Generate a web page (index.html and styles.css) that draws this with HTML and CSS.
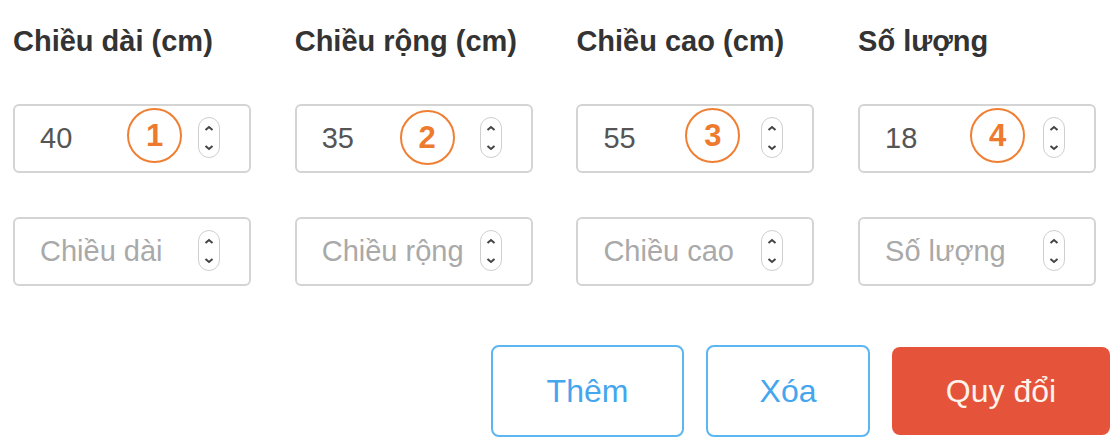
FILE: index.html
```html
<!DOCTYPE html>
<html lang="vi">
<head>
    <meta charset="UTF-8">
    <meta name="viewport" content="width=device-width, initial-scale=1.0">
    <title>Quy đổi kích thước</title>
    <link rel="stylesheet" href="styles.css">
</head>
<body>

    <div class="converter">
        <div class="grid">
            <div class="col-label">Chiều dài (cm)</div>
            <div class="col-label">Chiều rộng (cm)</div>
            <div class="col-label">Chiều cao (cm)</div>
            <div class="col-label">Số lượng</div>

            <!-- Hàng đầu tiên: giá trị đã nhập -->
            <div class="num-box">
                <span class="value">40</span>
                <span class="mark mark-1">1</span>
                <span class="spinner"><svg viewBox="0 0 22 40" width="22" height="40"><path d="M7.5 12 L11 9 L14.5 12 M7.5 28 L11 31 L14.5 28"/></svg></span>
            </div>
            <div class="num-box">
                <span class="value">35</span>
                <span class="mark mark-2">2</span>
                <span class="spinner"><svg viewBox="0 0 22 40" width="22" height="40"><path d="M7.5 12 L11 9 L14.5 12 M7.5 28 L11 31 L14.5 28"/></svg></span>
            </div>
            <div class="num-box">
                <span class="value">55</span>
                <span class="mark mark-3">3</span>
                <span class="spinner"><svg viewBox="0 0 22 40" width="22" height="40"><path d="M7.5 12 L11 9 L14.5 12 M7.5 28 L11 31 L14.5 28"/></svg></span>
            </div>
            <div class="num-box">
                <span class="value">18</span>
                <span class="mark mark-4">4</span>
                <span class="spinner"><svg viewBox="0 0 22 40" width="22" height="40"><path d="M7.5 12 L11 9 L14.5 12 M7.5 28 L11 31 L14.5 28"/></svg></span>
            </div>

            <!-- Hàng trống -->
            <div class="num-box">
                <span class="value placeholder">Chiều dài</span>
                <span class="spinner"><svg viewBox="0 0 22 40" width="22" height="40"><path d="M7.5 12 L11 9 L14.5 12 M7.5 28 L11 31 L14.5 28"/></svg></span>
            </div>
            <div class="num-box">
                <span class="value placeholder">Chiều rộng</span>
                <span class="spinner"><svg viewBox="0 0 22 40" width="22" height="40"><path d="M7.5 12 L11 9 L14.5 12 M7.5 28 L11 31 L14.5 28"/></svg></span>
            </div>
            <div class="num-box">
                <span class="value placeholder">Chiều cao</span>
                <span class="spinner"><svg viewBox="0 0 22 40" width="22" height="40"><path d="M7.5 12 L11 9 L14.5 12 M7.5 28 L11 31 L14.5 28"/></svg></span>
            </div>
            <div class="num-box">
                <span class="value placeholder">Số lượng</span>
                <span class="spinner"><svg viewBox="0 0 22 40" width="22" height="40"><path d="M7.5 12 L11 9 L14.5 12 M7.5 28 L11 31 L14.5 28"/></svg></span>
            </div>
        </div>

        <div class="actions">
            <button type="button" class="btn btn-outline btn-add">Thêm</button>
            <button type="button" class="btn btn-outline btn-del">Xóa</button>
            <button type="button" class="btn btn-convert">Quy đổi</button>
        </div>
    </div>

</body>
</html>
```

FILE: styles.css
```css
body {
    font-family: "Liberation Sans", Arial, sans-serif;
    margin: 0;
    padding: 0;
    background: #fff;
}

.converter {
    padding: 24px 4px 0 13px;
}

.grid {
    display: grid;
    grid-template-columns: repeat(4, 238px);
    column-gap: 43.7px;
}

.col-label {
    font-size: 29px;
    line-height: 34px;
    font-weight: bold;
    color: #333;
    margin-bottom: 46px;
}

.num-box {
    position: relative;
    height: 69px;
    box-sizing: border-box;
    border: 2px solid #d4d4d4;
    border-radius: 6px;
    display: flex;
    align-items: center;
    padding: 0 29px 0 25px;
    margin-bottom: 44px;
}

.value {
    flex: 1;
    font-size: 29px;
    color: #555;
}

.value.placeholder {
    color: #a9a9a9;
}

.spinner {
    width: 22px;
    height: 41px;
    box-sizing: border-box;
    border: 1.5px solid #cfcfcf;
    border-radius: 11px;
    display: flex;
    align-items: center;
    justify-content: center;
    margin-top: -2px;
}

.spinner svg {
    display: block;
    flex: none;
}

.spinner path {
    fill: none;
    stroke: #444;
    stroke-width: 2;
}

/* Vòng tròn đánh số */
.mark {
    position: absolute;
    top: 2px;
    width: 55px;
    height: 55px;
    box-sizing: border-box;
    border: 2px solid #ef7f33;
    border-radius: 50%;
    color: #ee7a2d;
    font-size: 31px;
    font-weight: bold;
    display: flex;
    align-items: center;
    justify-content: center;
}

.mark-1 { left: 112px; }
.mark-2 { left: 103px; top: 4px; }
.mark-3 { left: 107px; }
.mark-4 { left: 110px; }

.actions {
    display: flex;
    justify-content: flex-end;
    align-items: center;
    gap: 22px;
    margin-top: 15px;
}

.btn {
    font-family: "Liberation Sans", Arial, sans-serif;
    font-size: 32px;
    border-radius: 8px;
    cursor: pointer;
    box-sizing: border-box;
}

.btn-outline {
    height: 92px;
    background: #fff;
    border: 2px solid #5cb6f2;
    color: #45a6ee;
}

.btn-add { width: 193px; }
.btn-del { width: 164px; }

.btn-convert {
    width: 218px;
    height: 88px;
    border: none;
    background-color: #e5533a;
    color: #fdf3ea;
}

.btn-convert:hover {
    background-color: #d84a31;
}
```
